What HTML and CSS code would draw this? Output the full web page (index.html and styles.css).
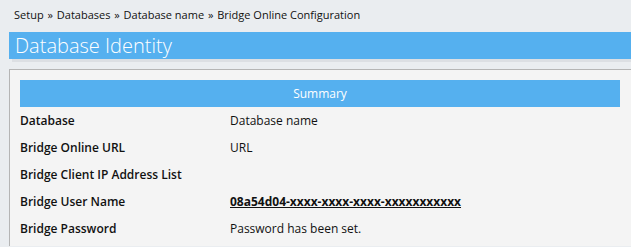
FILE: index.html
```html
<!DOCTYPE html>
<html lang="en">
<head>
    <meta charset="UTF-8">
    <title>Bridge Online Configuration</title>
    <link rel="stylesheet" href="styles.css">
</head>
<body>
    <div class="crumbs">
        <a href="#">Setup</a> <span class="sep">»</span>
        <a href="#">Databases</a> <span class="sep">»</span>
        <a href="#">Database name</a> <span class="sep">»</span>
        <span>Bridge Online Configuration</span>
    </div>
    <h1 class="page-title">Database Identity</h1>
    <div class="panel">
        <table class="summary">
            <thead>
                <tr><th colspan="2">Summary</th></tr>
            </thead>
            <tbody>
                <tr><td class="label">Database</td><td>Database name</td></tr>
                <tr><td class="label">Bridge Online URL</td><td>URL</td></tr>
                <tr><td class="label">Bridge Client IP Address List</td><td></td></tr>
                <tr><td class="label">Bridge User Name</td><td><a class="user" href="#">08a54d04-xxxx-xxxx-xxxx-xxxxxxxxxxx</a></td></tr>
                <tr><td class="label">Bridge Password</td><td>Password has been set.</td></tr>
            </tbody>
        </table>
    </div>
</body>
</html>
```
FILE: styles.css
```css
body{
    margin: 0;
    background-color: #eaedf0;
    font-family: "Open Sans", "Liberation Sans", sans-serif;
    font-size: 12px;
    color: #111;
    overflow: hidden;
}
.crumbs{
    padding: 7px 0 0 14px;
    height: 32px;
    box-sizing: border-box;
    line-height: 16px;
    font-size: 11px;
}
.crumbs a{
    color: #111;
    text-decoration: none;
}
.crumbs .sep{
    margin: 0 1px;
}
.page-title{
    margin: 0 0 0 9px;
    height: 27px;
    line-height: 27px;
    padding-left: 6px;
    background-color: #55b0ef;
    color: #fff;
    font-size: 20px;
    font-weight: 300;
    box-shadow: 3px 3px 0 #dcdfe3;
}
.panel{
    margin: 10px 0 0 9px;
    border-top: 1px solid #b5b5b5;
    border-left: 1px solid #b5b5b5;
    background-color: #f4f4f4;
    padding: 10px 0 4px 10px;
}
.summary{
    width: 600px;
    border-collapse: collapse;
}
.summary th{
    height: 27px;
    padding: 0;
    background-color: #55b0ef;
    color: #fff;
    font-weight: 400;
    font-size: 12px;
    text-align: center;
}
.summary td{
    height: 27px;
    padding: 0;
    vertical-align: middle;
}
.summary .label{
    width: 210px;
    font-weight: 600;
}
.user{
    color: #111;
    font-weight: 700;
}
```
